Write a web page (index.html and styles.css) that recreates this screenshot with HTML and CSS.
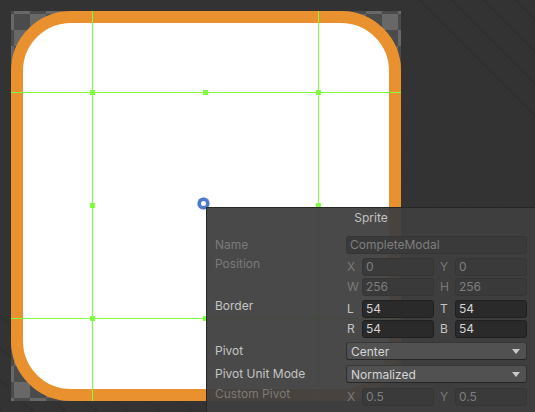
FILE: index.html
```html
<!DOCTYPE html>
<html>
<head>
<meta charset="utf-8">
<link rel="stylesheet" href="styles.css">
</head>
<body>
<div class="sprite">
  <div class="shape"></div>
  <div class="guide v g1"></div>
  <div class="guide v g2"></div>
  <div class="guide h g1"></div>
  <div class="guide h g2"></div>
  <div class="handle ha hx1 hy1"></div>
  <div class="handle ha hx2 hy1"></div>
  <div class="handle ha hx3 hy1"></div>
  <div class="handle ha hx1 hy2"></div>
  <div class="handle ha hx3 hy2"></div>
  <div class="handle ha hx1 hy3"></div>
  <div class="handle ha hx2 hy3"></div>
  <div class="handle ha hx3 hy3"></div>
  <div class="pivot"></div>
</div>
<section class="panel">
  <div class="title">Sprite</div>
  <div class="rows">
    <div class="row">
      <div class="label dim">Name</div>
      <div class="field off">CompleteModal</div>
    </div>
    <div class="row">
      <div class="label dim up">Position</div>
      <div class="group">
        <div class="pair">
          <div class="sub"><span class="sl dim">X</span><div class="field off">0</div></div>
          <div class="sub"><span class="sl dim">Y</span><div class="field off">0</div></div>
        </div>
        <div class="pair">
          <div class="sub"><span class="sl dim">W</span><div class="field off">256</div></div>
          <div class="sub"><span class="sl dim">H</span><div class="field off">256</div></div>
        </div>
      </div>
    </div>
    <div class="row">
      <div class="label up">Border</div>
      <div class="group">
        <div class="pair">
          <div class="sub"><span class="sl">L</span><div class="field on">54</div></div>
          <div class="sub"><span class="sl">T</span><div class="field on">54</div></div>
        </div>
        <div class="pair">
          <div class="sub"><span class="sl">R</span><div class="field on">54</div></div>
          <div class="sub"><span class="sl">B</span><div class="field on">54</div></div>
        </div>
      </div>
    </div>
    <div class="row dd-row">
      <div class="label">Pivot</div>
      <div class="dropdown"><span>Center</span><svg width="8" height="5" viewBox="0 0 8 5"><path d="M0 0H8L4 5Z" fill="#c9c9c9"/></svg></div>
    </div>
    <div class="row dd-row">
      <div class="label">Pivot Unit Mode</div>
      <div class="dropdown"><span>Normalized</span><svg width="8" height="5" viewBox="0 0 8 5"><path d="M0 0H8L4 5Z" fill="#c9c9c9"/></svg></div>
    </div>
    <div class="row">
      <div class="label dim up">Custom Pivot</div>
      <div class="pair">
        <div class="sub"><span class="sl dim">X</span><div class="field off">0.5</div></div>
        <div class="sub"><span class="sl dim">Y</span><div class="field off">0.5</div></div>
      </div>
    </div>
  </div>
</section>
</body>
</html>
```

FILE: styles.css
```css
html, body {
  margin: 0;
  height: 100%;
}
body {
  position: relative;
  box-sizing: border-box;
  height: 412px;
  overflow: hidden;
  padding: 11px;
  background-color: #333333;
  background-image: repeating-linear-gradient(45deg, #2f2f2f 0 0.8px, #333333 0.8px 22.6px);
  font-family: Inter, "Noto Sans", sans-serif;
  font-size: 12px;
}
.sprite {
  position: relative;
  width: 390px;
  height: 390px;
  background-color: #4b4b4b;
  background-image:
    linear-gradient(45deg, #686868 25%, transparent 25%, transparent 75%, #686868 75%),
    linear-gradient(45deg, #686868 25%, transparent 25%, transparent 75%, #686868 75%);
  background-size: 32px 32px;
  background-position: 3px 3px, 19px 19px;
}
.shape {
  box-sizing: border-box;
  width: 100%;
  height: 100%;
  border: 12px solid #e9912e;
  border-radius: 60px;
  background: #ffffff;
}
.guide {
  position: absolute;
  background: #80ff3c;
}
.guide.v { top: 0; bottom: 0; width: 1px; }
.guide.h { left: 0; right: 0; height: 1px; }
.guide.v.g1 { left: 81px; }
.guide.v.g2 { left: 307px; }
.guide.h.g1 { top: 81px; }
.guide.h.g2 { top: 307px; }
.handle {
  position: absolute;
  width: 5px;
  height: 5px;
  background: #80ff3c;
}
.hx1 { left: 79px; }
.hx2 { left: 192px; }
.hx3 { left: 305px; }
.hy1 { top: 79px; }
.hy2 { top: 192px; }
.hy3 { top: 305px; }
.pivot {
  position: absolute;
  left: 187px;
  top: 187px;
  width: 5px;
  height: 5px;
  border: 3px solid #4f79cf;
  border-radius: 50%;
  background: #ffffff;
  box-shadow: 0 0 1px 0.5px #3a5da8;
}
.panel {
  position: absolute;
  left: 206px;
  top: 207px;
  right: 0;
  bottom: -20px;
  box-sizing: border-box;
  border-top: 1px solid #262626;
  border-left: 1px solid #262626;
  background: rgba(63, 63, 63, 0.95);
  padding: 0 8px 0 8px;
  color: #c4c4c4;
}
.title {
  height: 20px;
  line-height: 20px;
  text-align: center;
  color: #c2c2c2;
  margin-bottom: 8px;
}
.rows {
  display: flex;
  flex-direction: column;
  gap: 4px;
}
.row {
  display: grid;
  grid-template-columns: 131px 1fr;
}
.label {
  line-height: 18px;
  white-space: nowrap;
  color: #c4c4c4;
}
.label.up { margin-top: -3px; }
.dim { color: #7a7a7a !important; }
.group {
  display: flex;
  flex-direction: column;
  gap: 2px;
}
.pair {
  display: grid;
  grid-template-columns: 1fr 1fr;
  column-gap: 5px;
}
.sub {
  display: flex;
  height: 18px;
}
.sl {
  width: 16px;
  flex: none;
  line-height: 18px;
  padding-left: 1px;
  box-sizing: border-box;
  color: #c4c4c4;
}
.field {
  flex: 1;
  box-sizing: border-box;
  height: 18px;
  line-height: 16px;
  border-radius: 3px;
  border: 1px solid;
  padding: 0 3px;
  white-space: nowrap;
  overflow: hidden;
}
.field.off {
  background: #3a3a3a;
  border-color: #353535;
  color: #7e7e7e;
}
.field.on {
  background: #2a2a2a;
  border-color: #1f1f1f;
  color: #d2d2d2;
}
.dd-row { height: 19px; }
.dropdown {
  box-sizing: border-box;
  height: 18px;
  display: flex;
  align-items: center;
  justify-content: space-between;
  padding: 0 6px 0 4px;
  background: #515151;
  border: 1px solid #303030;
  border-top-color: #383838;
  border-bottom-color: #262626;
  border-radius: 3px;
  color: #d4d4d4;
}
```
